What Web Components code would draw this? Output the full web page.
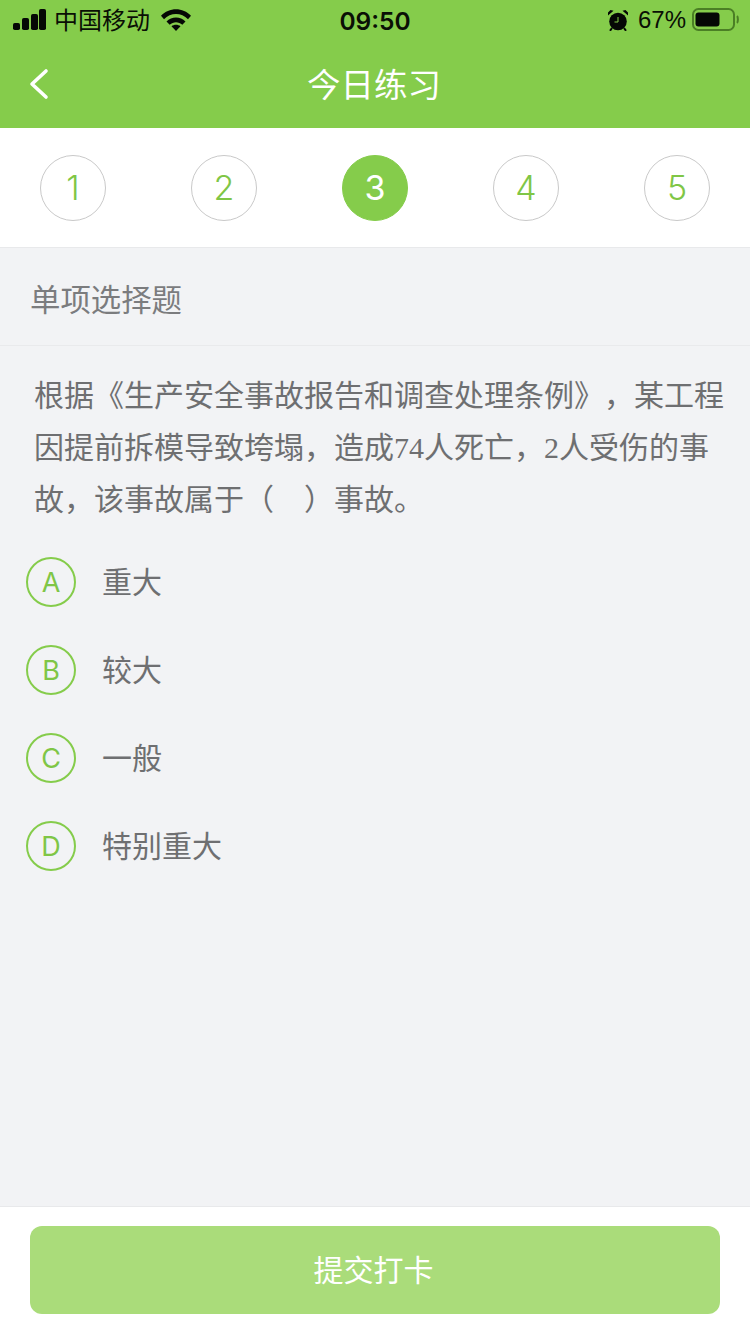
<!DOCTYPE html>
<html lang="zh-CN"><head><meta charset="utf-8"><style>
html,body{margin:0;padding:0;width:750px;height:1334px;overflow:hidden;background:#f2f3f5;font-family:"Noto Sans CJK SC","Liberation Sans",sans-serif}
app-screen{height:1334px}
question-text span{font-family:"Liberation Serif",serif;line-height:0}
</style></head><body>
<app-screen>
<status-bar></status-bar>
<nav-bar>今日练习</nav-bar>
<step-row>
<step-dot>1</step-dot><step-dot>2</step-dot><step-dot active>3</step-dot><step-dot>4</step-dot><step-dot>5</step-dot>
</step-row>
<section-title>单项选择题</section-title>
<question-text>根据《生产安全事故报告和调查处理条例》，某工程因提前拆模导致垮塌，造成<span>74</span>人死亡，<span>2</span>人受伤的事故，该事故属于（　）事故。</question-text>
<option-list>
<quiz-option letter="A">重大</quiz-option>
<quiz-option letter="B">较大</quiz-option>
<quiz-option letter="C">一般</quiz-option>
<quiz-option letter="D">特别重大</quiz-option>
</option-list>
<submit-bar>提交打卡</submit-bar>
</app-screen>
<script>
function def(name,html,init){
  customElements.define(name,class extends HTMLElement{
    constructor(){super();this.attachShadow({mode:'open'}).innerHTML=html;}
    connectedCallback(){if(init)init(this);}
  });
}
const CJK='"Noto Sans CJK SC","Liberation Sans",sans-serif';
def('app-screen',`<style>:host{display:flex;flex-direction:column;width:750px;background:#f2f3f5}</style><slot></slot>`);
def('status-bar',`<style>
:host{display:flex;align-items:center;height:40px;background:#85cc4b;color:#0a0f05;font-family:${CJK}}
.l{display:flex;align-items:center;padding-left:13px;gap:8px;flex:1}
.c{font:600 24.500px "Inter","Liberation Sans",sans-serif;padding:2px 2px 0 0}
.r{display:flex;align-items:center;justify-content:flex-end;flex:1;padding-right:11px;gap:10px;font:400 24px "Liberation Sans",sans-serif}
.carrier{font-size:24px;line-height:40px;margin-top:-2px}
svg{display:block}
</style>
<div class="l">
<svg width="33" height="22" viewBox="0 0 33 22"><rect x="0" y="14" width="7" height="7" rx="1.800" fill="#050805"/><rect x="9" y="9" width="7" height="12" rx="1.800" fill="#050805"/><rect x="18" y="5" width="7" height="16" rx="1.800" fill="#050805"/><rect x="26" y="0" width="7" height="21" rx="1.800" fill="#050805"/></svg>
<svg width="30" height="22" viewBox="0 0 30 22" style="order:2;margin-left:3px"><path d="M0 6.800C8-1.900 22-1.900 30 6.800L27 10.200C20.500 3.300 9.500 3.300 3 10.200z" fill="#050805"/><path d="M5.500 12.400C10.600 7.200 19.400 7.200 24.500 12.400L21.300 15.700C17.800 12.300 12.200 12.300 8.700 15.700z" fill="#050805"/><path d="M10.500 17.300C13 15.300 17 15.300 19.500 17.300L15 22z" fill="#050805"/></svg>
<span class="carrier">中国移动</span>
</div>
<div class="c">09:50</div>
<div class="r">
<svg width="20" height="21" viewBox="0 0 20 21"><circle cx="10" cy="11.500" r="8.800" fill="#050805"/><path d="M10 7V12H6.500" fill="none" stroke="#85cc4b" stroke-width="1"/><path d="M0 5.500 5.500 0.800 2.500 0 0 2.500zM20 5.500 14.500 0.800 17.500 0 20 2.500z" fill="#050805"/><path d="M4 18 2 20.800M16 18 18 20.800" stroke="#050805" stroke-width="2"/></svg>
<span>67%</span>
<svg width="47" height="24" viewBox="0 0 47 24" style="margin-left:-4px"><rect x="1" y="1" width="41" height="21" rx="5.500" fill="none" stroke="#4b7f25" stroke-width="2"/><rect x="3.500" y="4.500" width="24" height="14" rx="3" fill="#050805"/><path d="M45 8c1.200 1 1.200 6 0 7" fill="none" stroke="#4b7f25" stroke-width="2"/></svg>
</div>`);
def('nav-bar',`<style>
:host{display:flex;align-items:center;justify-content:center;height:88px;background:#85cc4b;color:#fff;position:relative;font:400 33.500px ${CJK}}
svg{position:absolute;left:28px;top:27px}
.t{padding-bottom:3px;margin-left:-2px}
</style>
<svg width="22" height="34" viewBox="0 0 22 34"><path d="M18 4 4 17 18 30" fill="none" stroke="#fff" stroke-width="3.600" stroke-linecap="round" stroke-linejoin="round"/></svg>
<span class="t"><slot></slot></span>`);
def('step-row',`<style>:host{display:flex;justify-content:space-between;align-items:center;height:119px;padding:0 40px;background:#fff;border-bottom:1px solid #e8e9eb}</style><slot></slot>`);
def('step-dot',`<style>
:host{display:flex;align-items:center;justify-content:center;width:66px;height:66px;box-sizing:border-box;border-radius:50%;border:1px solid #c9c9c9;color:#7fc646;background:#fff;font:350 34px "Inter","Liberation Sans",sans-serif}
:host([active]){background:#85cc4b;border-color:#85cc4b;color:#fff;font-weight:400}
</style><slot></slot>`);
def('section-title',`<style>:host{display:flex;align-items:center;height:97px;padding-left:30px;border-bottom:1px solid #e9eaec;color:#7b7c7e;font:400 30.400px ${CJK}}
span{padding-top:3px}</style><span><slot></slot></span>`);
def('question-text',`<style>:host{display:block;padding:21px 20px 34px 34px;color:#6e6f71;font:400 30px/52px ${CJK};text-spacing-trim:space-all}</style><slot></slot>`);
def('option-list',`<style>:host{display:flex;flex-direction:column;gap:38px;padding-left:26px}</style><slot></slot>`);
def('quiz-option',`<style>
:host{display:flex;align-items:center;height:50px;gap:26px;color:#6e6f71;font:400 30px ${CJK}}
.b{width:50px;height:50px;box-sizing:border-box;border:2.500px solid #85cc4b;border-radius:50%;display:flex;align-items:center;justify-content:center;color:#7fc646;font:400 27px "Inter","Liberation Sans",sans-serif}
.t{padding-bottom:4px}
</style><span class="b"></span><span class="t"><slot></slot></span>`,el=>{el.shadowRoot.querySelector('.b').textContent=el.getAttribute('letter')});
def('submit-bar',`<style>
:host{display:block;margin-top:auto;background:#fff;border-top:1px solid #e8e9eb;padding:19px 30px 20px}
.btn{display:flex;align-items:center;justify-content:center;height:88px;border-radius:12px;background:#aadc7a;color:#fff;font:400 30px ${CJK}}
span{padding:0 3px 4px 0}
</style><div class="btn"><span><slot></slot></span></div>`);
</script>
</body></html>
